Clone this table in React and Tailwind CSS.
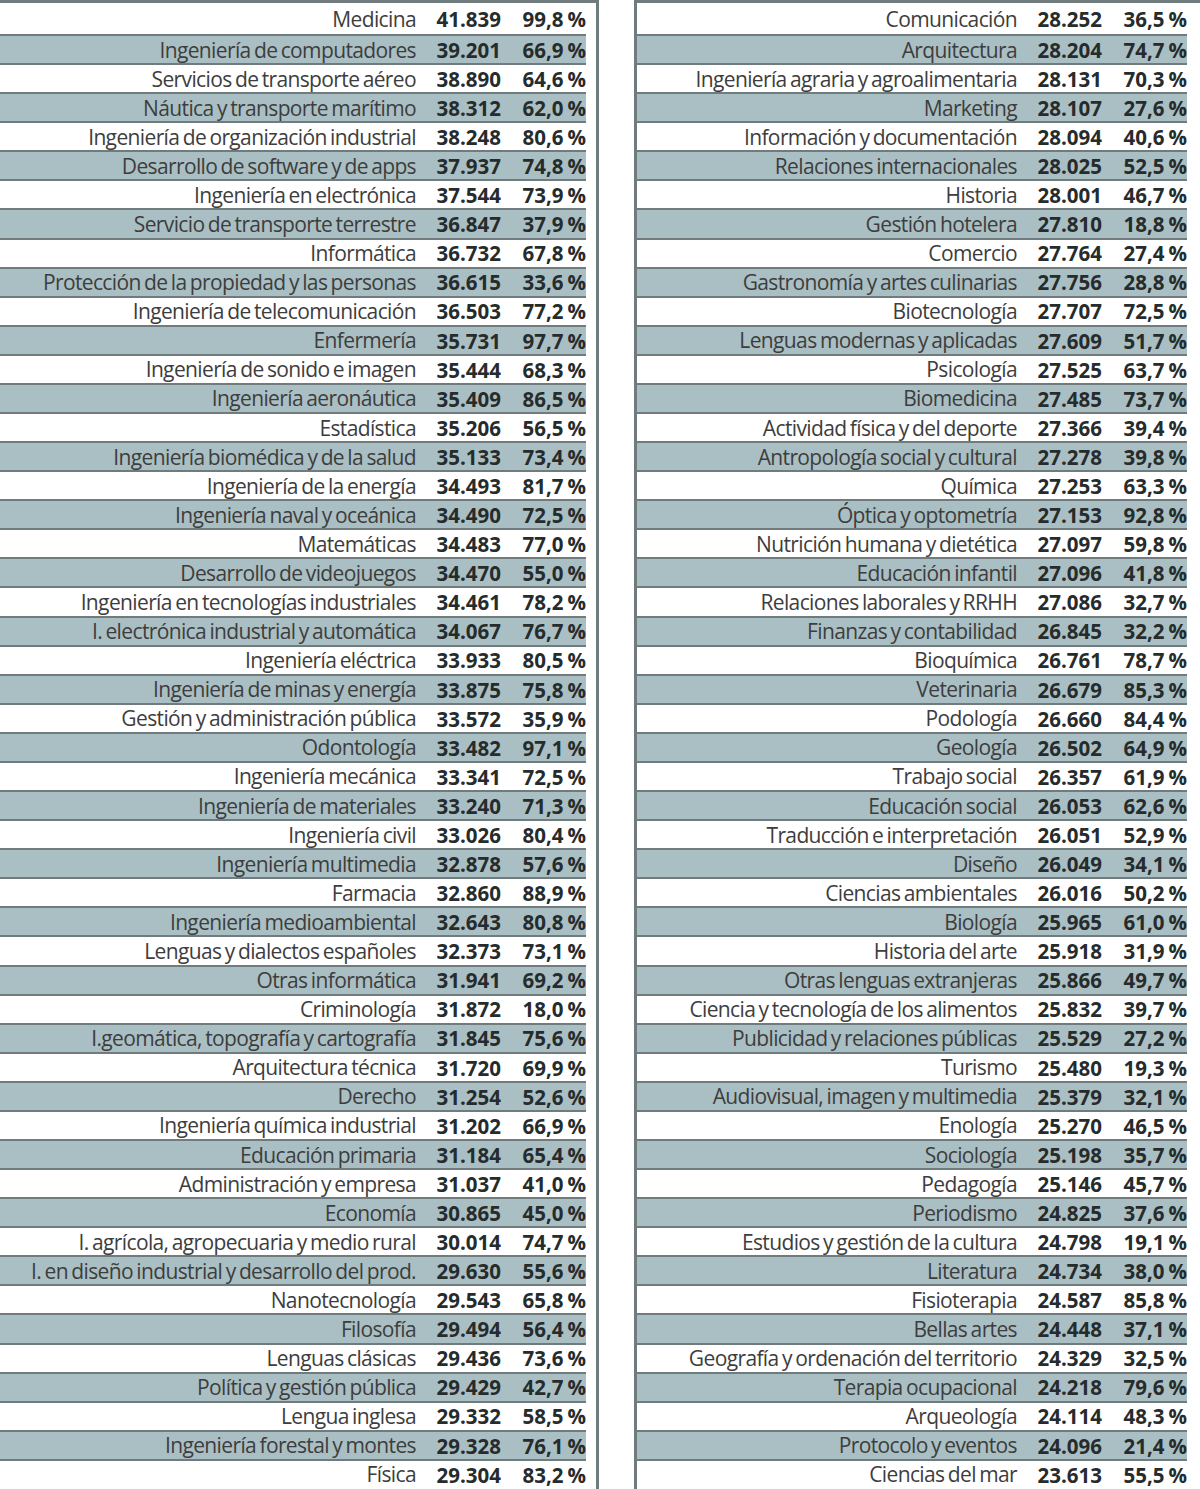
const IZQUIERDA = [
  ["Medicina", "41.839", "99,8"],
  ["Ingeniería de computadores", "39.201", "66,9"],
  ["Servicios de transporte aéreo", "38.890", "64,6"],
  ["Náutica y transporte marítimo", "38.312", "62,0"],
  ["Ingeniería de organización industrial", "38.248", "80,6"],
  ["Desarrollo de software y de apps", "37.937", "74,8"],
  ["Ingeniería en electrónica", "37.544", "73,9"],
  ["Servicio de transporte terrestre", "36.847", "37,9"],
  ["Informática", "36.732", "67,8"],
  ["Protección de la propiedad y las personas", "36.615", "33,6"],
  ["Ingeniería de telecomunicación", "36.503", "77,2"],
  ["Enfermería", "35.731", "97,7"],
  ["Ingeniería de sonido e imagen", "35.444", "68,3"],
  ["Ingeniería aeronáutica", "35.409", "86,5"],
  ["Estadística", "35.206", "56,5"],
  ["Ingeniería biomédica y de la salud", "35.133", "73,4"],
  ["Ingeniería de la energía", "34.493", "81,7"],
  ["Ingeniería naval y oceánica", "34.490", "72,5"],
  ["Matemáticas", "34.483", "77,0"],
  ["Desarrollo de videojuegos", "34.470", "55,0"],
  ["Ingeniería en tecnologías industriales", "34.461", "78,2"],
  ["I. electrónica industrial y automática", "34.067", "76,7"],
  ["Ingeniería eléctrica", "33.933", "80,5"],
  ["Ingeniería de minas y energía", "33.875", "75,8"],
  ["Gestión y administración pública", "33.572", "35,9"],
  ["Odontología", "33.482", "97,1"],
  ["Ingeniería mecánica", "33.341", "72,5"],
  ["Ingeniería de materiales", "33.240", "71,3"],
  ["Ingeniería civil", "33.026", "80,4"],
  ["Ingeniería multimedia", "32.878", "57,6"],
  ["Farmacia", "32.860", "88,9"],
  ["Ingeniería medioambiental", "32.643", "80,8"],
  ["Lenguas y dialectos españoles", "32.373", "73,1"],
  ["Otras informática", "31.941", "69,2"],
  ["Criminología", "31.872", "18,0"],
  ["I.geomática, topografía y cartografía", "31.845", "75,6"],
  ["Arquitectura técnica", "31.720", "69,9"],
  ["Derecho", "31.254", "52,6"],
  ["Ingeniería química industrial", "31.202", "66,9"],
  ["Educación primaria", "31.184", "65,4"],
  ["Administración y empresa", "31.037", "41,0"],
  ["Economía", "30.865", "45,0"],
  ["I. agrícola, agropecuaria y medio rural", "30.014", "74,7"],
  ["I. en diseño industrial y desarrollo del prod.", "29.630", "55,6"],
  ["Nanotecnología", "29.543", "65,8"],
  ["Filosofía", "29.494", "56,4"],
  ["Lenguas clásicas", "29.436", "73,6"],
  ["Política y gestión pública", "29.429", "42,7"],
  ["Lengua inglesa", "29.332", "58,5"],
  ["Ingeniería forestal y montes", "29.328", "76,1"],
  ["Física", "29.304", "83,2"],
];

const DERECHA = [
  ["Comunicación", "28.252", "36,5"],
  ["Arquitectura", "28.204", "74,7"],
  ["Ingeniería agraria y agroalimentaria", "28.131", "70,3"],
  ["Marketing", "28.107", "27,6"],
  ["Información y documentación", "28.094", "40,6"],
  ["Relaciones internacionales", "28.025", "52,5"],
  ["Historia", "28.001", "46,7"],
  ["Gestión hotelera", "27.810", "18,8"],
  ["Comercio", "27.764", "27,4"],
  ["Gastronomía y artes culinarias", "27.756", "28,8"],
  ["Biotecnología", "27.707", "72,5"],
  ["Lenguas modernas y aplicadas", "27.609", "51,7"],
  ["Psicología", "27.525", "63,7"],
  ["Biomedicina", "27.485", "73,7"],
  ["Actividad física y del deporte", "27.366", "39,4"],
  ["Antropología social y cultural", "27.278", "39,8"],
  ["Química", "27.253", "63,3"],
  ["Óptica y optometría", "27.153", "92,8"],
  ["Nutrición humana y dietética", "27.097", "59,8"],
  ["Educación infantil", "27.096", "41,8"],
  ["Relaciones laborales y RRHH", "27.086", "32,7"],
  ["Finanzas y contabilidad", "26.845", "32,2"],
  ["Bioquímica", "26.761", "78,7"],
  ["Veterinaria", "26.679", "85,3"],
  ["Podología", "26.660", "84,4"],
  ["Geología", "26.502", "64,9"],
  ["Trabajo social", "26.357", "61,9"],
  ["Educación social", "26.053", "62,6"],
  ["Traducción e interpretación", "26.051", "52,9"],
  ["Diseño", "26.049", "34,1"],
  ["Ciencias ambientales", "26.016", "50,2"],
  ["Biología", "25.965", "61,0"],
  ["Historia del arte", "25.918", "31,9"],
  ["Otras lenguas extranjeras", "25.866", "49,7"],
  ["Ciencia y tecnología de los alimentos", "25.832", "39,7"],
  ["Publicidad y relaciones públicas", "25.529", "27,2"],
  ["Turismo", "25.480", "19,3"],
  ["Audiovisual, imagen y multimedia", "25.379", "32,1"],
  ["Enología", "25.270", "46,5"],
  ["Sociología", "25.198", "35,7"],
  ["Pedagogía", "25.146", "45,7"],
  ["Periodismo", "24.825", "37,6"],
  ["Estudios y gestión de la cultura", "24.798", "19,1"],
  ["Literatura", "24.734", "38,0"],
  ["Fisioterapia", "24.587", "85,8"],
  ["Bellas artes", "24.448", "37,1"],
  ["Geografía y ordenación del territorio", "24.329", "32,5"],
  ["Terapia ocupacional", "24.218", "79,6"],
  ["Arqueología", "24.114", "48,3"],
  ["Protocolo y eventos", "24.096", "21,4"],
  ["Ciencias del mar", "23.613", "55,5"],
];

function Fila({ fila, i }) {
  const [carrera, nota, porcentaje] = fila;
  return (
    <div
      className={
        (i === 0 ? "h-[31px] " : "h-[29.08px] border-t-2 border-[#6f7b7c] ") +
        (i % 2 === 1 ? "bg-[#aabfc3] " : "bg-white ") +
        "flex items-center pt-[1px]"
      }
    >
      <div className="flex-1 min-w-0 text-right whitespace-nowrap text-[21px] leading-none tracking-[-0.03em] [word-spacing:-0.07em] text-[#3d3d3d] font-['Open_Sans',sans-serif]">
        {carrera}
      </div>
      <div className="w-[85px] text-right text-[20.5px] leading-none font-bold text-[#262b2c] font-['Open_Sans',sans-serif]">
        {nota}
      </div>
      <div className="w-[85px] text-right text-[20.5px] leading-none font-bold text-[#262b2c] font-['Open_Sans',sans-serif]">
        {porcentaje}
        <span className="ml-[4px]">%</span>
      </div>
    </div>
  );
}

function Tabla({ filas, className }) {
  return (
    <div className={"flex flex-col border-t-[3px] border-[#6f7b7c] " + className}>
      {filas.map((fila, i) => (
        <Fila key={fila[0]} fila={fila} i={i} />
      ))}
    </div>
  );
}

export default function App() {
  return (
    <div className="w-[1200px] h-[1489px] bg-white flex overflow-hidden">
      <Tabla filas={IZQUIERDA} className="w-[599px] border-r-[3px] pr-[10px]" />
      <div className="w-[35px]" />
      <Tabla filas={DERECHA} className="flex-1 border-l-[3px] pr-[13px]" />
    </div>
  );
}
